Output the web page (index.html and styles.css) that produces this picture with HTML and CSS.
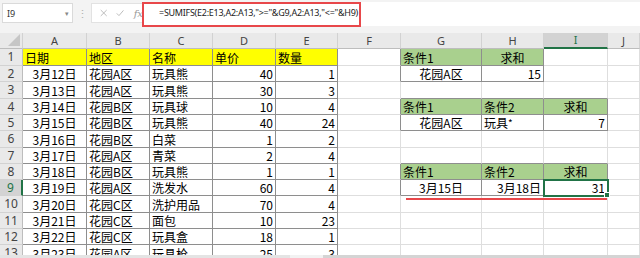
FILE: index.html
```html
<!DOCTYPE html>
<html lang="zh">
<head>
<meta charset="utf-8">
<link rel="stylesheet" href="styles.css">
</head>
<body>
<div class="top">
  <div class="namebox"><span>I9</span><span class="arrow">▾</span></div>
  <div class="dots">⋮</div>
  <div class="fxbox">
    <svg width="10" height="10" viewBox="0 0 10 10"><path d="M1 1L9 9M9 1L1 9" stroke="#b5b5b5" stroke-width="1.2" fill="none"/></svg>
    <svg width="11" height="10" viewBox="0 0 11 10"><path d="M1 5.5L4 8.5L10 1.5" stroke="#b5b5b5" stroke-width="1.2" fill="none"/></svg>
    <span class="fx">fx</span>
  </div>
  <div class="formula">=SUMIFS(E2:E13,A2:A13,"&gt;="&amp;G9,A2:A13,"&lt;="&amp;H9)</div>
  <div class="redbox"></div>
</div>
<div class="sheet">
  <div class="grid">
    <!-- header row -->
    <div class="c h corner"><svg width="12" height="12" viewBox="0 0 12 12"><path d="M12 0V12H0Z" fill="#c6c6c6"/></svg></div>
    <div class="c h">A</div><div class="c h">B</div><div class="c h">C</div><div class="c h">D</div><div class="c h">E</div><div class="c h">F</div><div class="c h">G</div><div class="c h">H</div><div class="c h sel">I</div><div class="c h">J</div>
    <!-- row 1 -->
    <div class="c r">1</div>
    <div class="c d y">日期</div><div class="c d y">地区</div><div class="c d y">名称</div><div class="c d y">单价</div><div class="c d y">数量</div>
    <div class="c dr"></div><div class="c d g">条件1</div><div class="c d g ctr">求和</div><div class="c"></div><div class="c"></div>
    <!-- row 2 -->
    <div class="c r">2</div>
    <div class="c d ctr">3月12日</div><div class="c d">花园A区</div><div class="c d">玩具熊</div><div class="c d num">40</div><div class="c d num">1</div>
    <div class="c dr"></div><div class="c d ctr">花园A区</div><div class="c d num">15</div><div class="c"></div><div class="c"></div>
    <!-- row 3 -->
    <div class="c r">3</div>
    <div class="c d ctr">3月13日</div><div class="c d">花园A区</div><div class="c d">玩具熊</div><div class="c d num">30</div><div class="c d num">3</div>
    <div class="c"></div><div class="c db"></div><div class="c db"></div><div class="c db"></div><div class="c"></div>
    <!-- row 4 -->
    <div class="c r">4</div>
    <div class="c d ctr">3月14日</div><div class="c d">花园B区</div><div class="c d">玩具球</div><div class="c d num">10</div><div class="c d num">4</div>
    <div class="c dr"></div><div class="c d g">条件1</div><div class="c d g">条件2</div><div class="c d g ctr">求和</div><div class="c"></div>
    <!-- row 5 -->
    <div class="c r">5</div>
    <div class="c d ctr">3月15日</div><div class="c d">花园B区</div><div class="c d">玩具熊</div><div class="c d num">40</div><div class="c d num">24</div>
    <div class="c dr"></div><div class="c d ctr">花园A区</div><div class="c d">玩具<span class="ast">*</span></div><div class="c d num">7</div><div class="c"></div>
    <!-- row 6 -->
    <div class="c r">6</div>
    <div class="c d ctr">3月16日</div><div class="c d">花园B区</div><div class="c d">白菜</div><div class="c d num">1</div><div class="c d num">2</div>
    <div class="c"></div><div class="c"></div><div class="c"></div><div class="c"></div><div class="c"></div>
    <!-- row 7 -->
    <div class="c r">7</div>
    <div class="c d ctr">3月17日</div><div class="c d">花园A区</div><div class="c d">青菜</div><div class="c d num">2</div><div class="c d num">4</div>
    <div class="c"></div><div class="c db"></div><div class="c db"></div><div class="c db"></div><div class="c"></div>
    <!-- row 8 -->
    <div class="c r">8</div>
    <div class="c d ctr">3月18日</div><div class="c d">花园B区</div><div class="c d">玩具熊</div><div class="c d num">1</div><div class="c d num">1</div>
    <div class="c dr"></div><div class="c d g">条件1</div><div class="c d g">条件2</div><div class="c d g ctr">求和</div><div class="c"></div>
    <!-- row 9 -->
    <div class="c r selr">9</div>
    <div class="c d ctr">3月19日</div><div class="c d">花园A区</div><div class="c d">洗发水</div><div class="c d num">60</div><div class="c d num">4</div>
    <div class="c dr"></div><div class="c d ctr">3月15日</div><div class="c d num">3月18日</div><div class="c d num active">31</div><div class="c"></div>
    <!-- row 10 -->
    <div class="c r">10</div>
    <div class="c d ctr">3月20日</div><div class="c d">花园C区</div><div class="c d">洗护用品</div><div class="c d num">70</div><div class="c d num">4</div>
    <div class="c"></div><div class="c"></div><div class="c"></div><div class="c"></div><div class="c"></div>
    <!-- row 11 -->
    <div class="c r">11</div>
    <div class="c d ctr">3月21日</div><div class="c d">花园C区</div><div class="c d">面包</div><div class="c d num">10</div><div class="c d num">23</div>
    <div class="c"></div><div class="c"></div><div class="c"></div><div class="c"></div><div class="c"></div>
    <!-- row 12 -->
    <div class="c r">12</div>
    <div class="c d ctr">3月22日</div><div class="c d">花园C区</div><div class="c d">玩具盒</div><div class="c d num">18</div><div class="c d num">1</div>
    <div class="c"></div><div class="c"></div><div class="c"></div><div class="c"></div><div class="c"></div>
    <!-- row 13 -->
    <div class="c r">13</div>
    <div class="c d ctr">3月23日</div><div class="c d">花园A区</div><div class="c d">玩具枪</div><div class="c d num">25</div><div class="c d num">3</div>
    <div class="c"></div><div class="c"></div><div class="c"></div><div class="c"></div><div class="c"></div>
  </div>
  <div class="underline"></div>
</div>
<div class="bottombar"><div class="seg1"></div><div class="seg2"></div></div>
</body>
</html>
```
FILE: styles.css
```css
html, body {
  margin: 0;
  padding: 0;
}
body {
  width: 640px;
  height: 258px;
  overflow: hidden;
  background: #fff;
  font-family: "Noto Sans CJK SC", "Noto Sans", sans-serif;
  display: flex;
  flex-direction: column;
  position: relative;
}
.top {
  height: 33px;
  flex: none;
  background: #f3f3f3;
  display: flex;
  align-items: flex-start;
  padding-top: 3px;
  box-sizing: border-box;
  position: relative;
}
.namebox {
  margin-left: 2px;
  width: 71px;
  height: 20px;
  box-sizing: border-box;
  background: #fff;
  border: 1px solid #dadada;
  display: flex;
  align-items: center;
  justify-content: space-between;
  padding: 0 3px 0 4px;
  font-family: "Noto Sans", sans-serif;
  font-size: 9px;
  color: #333;
}
.arrow {
  font-size: 7px;
  color: #888;
}
.dots {
  width: 18px;
  text-align: center;
  color: #b0b0b0;
  font-size: 11px;
  line-height: 20px;
}
.fxbox {
  width: 52px;
  height: 20px;
  box-sizing: border-box;
  background: #fff;
  border: 1px solid #e2e2e2;
  border-right: none;
  display: flex;
  align-items: center;
  gap: 9px;
  padding-left: 8px;
}
.fx {
  font-family: "DejaVu Serif", serif;
  font-style: italic;
  font-size: 10px;
  color: #999;
}
.formula {
  flex: 1;
  height: 24px;
  margin-top: -1px;
  background: #fff;
  font-family: "Noto Sans", sans-serif;
  font-size: 9px;
  letter-spacing: -0.27px;
  color: #222;
  padding-left: 16px;
  line-height: 21px;
  white-space: nowrap;
}
.redbox {
  position: absolute;
  left: 142px;
  top: 2px;
  width: 219px;
  height: 25px;
  box-sizing: border-box;
  border: 2px solid #e8474a;
}
.sheet {
  flex: 1;
  overflow: hidden;
  position: relative;
}
.grid {
  display: grid;
  grid-template-columns: 23px 64px 63px 63px 63px 62px 63px 81px 62px 64px 32px;
  grid-template-rows: 16px 17px 16px 17px 16px 16px 17px 16px 16px 16px 17px 16px 16px 17px;
}
.c {
  box-sizing: border-box;
  border-right: 1px solid #dedede;
  border-bottom: 1px solid #dedede;
  font-size: 12px;
  line-height: 14px;
  color: #000;
  display: flex;
  align-items: flex-end;
  padding: 0 2px 0 2px;
  white-space: nowrap;
  overflow: hidden;
}
.h {
  background: #e9e9e9;
  border-right-color: #d2d2d2;
  border-bottom-color: #bdbdbd;
  justify-content: center;
  align-items: center;
  font-family: "Noto Sans", sans-serif;
  font-size: 11px;
  color: #444;
  padding: 0;
}
.corner {
  justify-content: flex-end;
  align-items: flex-end;
  padding: 0 2px 2px 0;
}
.r {
  background: #e9e9e9;
  border-right-color: #bdbdbd;
  border-bottom-color: #d2d2d2;
  justify-content: center;
  align-items: center;
  font-family: "Noto Sans", sans-serif;
  font-size: 12px;
  color: #444;
  padding: 0;
}
.sel {
  background: #d3d3d3;
  color: #217346;
  border-bottom: 2px solid #217346;
}
.selr {
  background: #d3d3d3;
  color: #217346;
  border-right: 2px solid #217346;
}
.d {
  border-right-color: #8e8e8e;
  border-bottom-color: #8e8e8e;
}
.dr {
  border-right-color: #8e8e8e;
}
.db {
  border-bottom-color: #8e8e8e;
}
.y {
  background: #ffff00;
}
.g {
  background: #a9d08e;
}
.ctr {
  justify-content: center;
}
.num {
  justify-content: flex-end;
}
.ast {
  font-size: 10px;
  align-self: center;
}
.active {
  position: relative;
  outline: 2px solid #217346;
  outline-offset: -1px;
  z-index: 2;
  overflow: visible;
}
.active::after {
  content: "";
  position: absolute;
  right: -3px;
  bottom: -3px;
  width: 4px;
  height: 4px;
  background: #217346;
  border: 1px solid #fff;
}
.underline {
  position: absolute;
  left: 406px;
  top: 165px;
  width: 201px;
  height: 2px;
  background: #e8474a;
}
.bottombar {
  height: 3px;
  flex: none;
  background: #d4d4d4;
  display: flex;
}
.seg1 {
  width: 290px;
  background: #e4e4e4;
}
.seg2 {
  width: 33px;
  background: #f2f2f2;
}
```
